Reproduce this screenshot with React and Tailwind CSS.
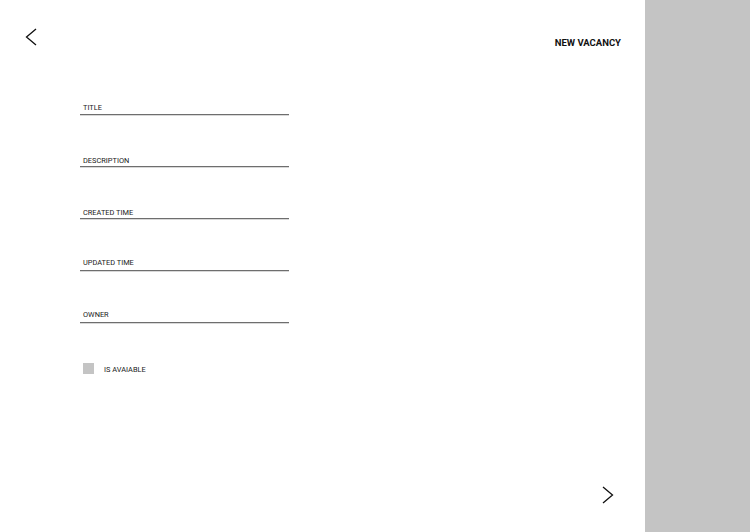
import React from "react";

function Field({ label, pb = "pb-[2px]" }) {
  return (
    <div className="h-[52px] flex flex-col justify-end">
      <div className={"pl-[3px] text-[7.4px] leading-[9px] text-[#1a1a1a] " + pb}>{label}</div>
      <div className="h-px bg-[#6e6e6e]" />
      <div className="h-px bg-[#d8d8d8]" />
    </div>
  );
}

export default function App() {
  return (
    <div className="flex w-[750px] h-[532px] bg-white" style={{ fontFamily: "Roboto, 'Liberation Sans', sans-serif" }}>
      <div className="w-[645px] h-full flex flex-col">
        <div className="flex justify-between items-start h-[64px]">
          <svg className="ml-[25px] mt-[28px]" width="12" height="18" viewBox="0 0 12 18" fill="none">
            <polyline points="11,1 1.5,9 11,17" stroke="#111" strokeWidth="1.3" />
          </svg>
          <div className="mt-[38px] mr-[24px] text-[9.5px] leading-[10px] font-bold text-[#111]">NEW VACANCY</div>
        </div>
        <div className="ml-[80px] w-[209px]">
          <Field label="TITLE" />
          <Field label="DESCRIPTION" pb="pb-[1px]" />
          <Field label="CREATED TIME" pb="pb-[1px]" />
          <Field label="UPDATED TIME" pb="pb-[3px]" />
          <Field label="OWNER" pb="pb-[3px]" />
        </div>
        <div className="ml-[83px] mt-[39px] flex items-center gap-[10px]">
          <div className="w-[11px] h-[11px] bg-[#c4c4c4]" />
          <div className="mt-[2px] text-[7.4px] leading-[8px] text-[#1a1a1a]">IS AVAIABLE</div>
        </div>
        <div className="mt-auto flex justify-end pr-[31px] pb-[28px]">
          <svg width="12" height="18" viewBox="0 0 12 18" fill="none">
            <polyline points="1,1 10.5,9 1,17" stroke="#111" strokeWidth="1.3" />
          </svg>
        </div>
      </div>
      <div className="flex-1 h-full bg-[#c4c4c4]" />
    </div>
  );
}
